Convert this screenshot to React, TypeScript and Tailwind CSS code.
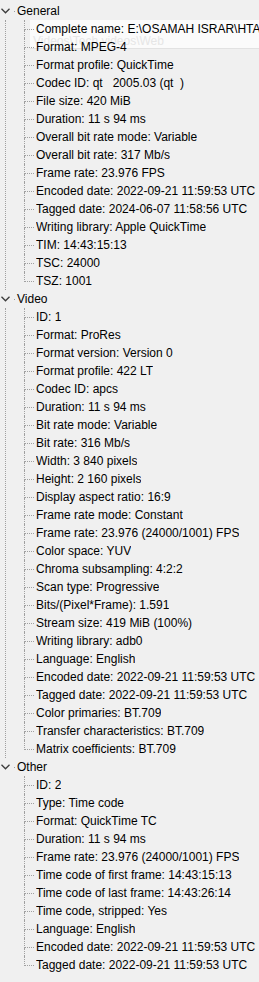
const sections = [
  {
    title: "General",
    items: [
      "Complete name: E:\\OSAMAH ISRAR\\HTA Videos\\Tech videos\\Web\\clip.mov",
      "Format: MPEG-4",
      "Format profile: QuickTime",
      "Codec ID: qt   2005.03 (qt  )",
      "File size: 420 MiB",
      "Duration: 11 s 94 ms",
      "Overall bit rate mode: Variable",
      "Overall bit rate: 317 Mb/s",
      "Frame rate: 23.976 FPS",
      "Encoded date: 2022-09-21 11:59:53 UTC",
      "Tagged date: 2024-06-07 11:58:56 UTC",
      "Writing library: Apple QuickTime",
      "TIM: 14:43:15:13",
      "TSC: 24000",
      "TSZ: 1001",
    ],
  },
  {
    title: "Video",
    items: [
      "ID: 1",
      "Format: ProRes",
      "Format version: Version 0",
      "Format profile: 422 LT",
      "Codec ID: apcs",
      "Duration: 11 s 94 ms",
      "Bit rate mode: Variable",
      "Bit rate: 316 Mb/s",
      "Width: 3 840 pixels",
      "Height: 2 160 pixels",
      "Display aspect ratio: 16:9",
      "Frame rate mode: Constant",
      "Frame rate: 23.976 (24000/1001) FPS",
      "Color space: YUV",
      "Chroma subsampling: 4:2:2",
      "Scan type: Progressive",
      "Bits/(Pixel*Frame): 1.591",
      "Stream size: 419 MiB (100%)",
      "Writing library: adb0",
      "Language: English",
      "Encoded date: 2022-09-21 11:59:53 UTC",
      "Tagged date: 2022-09-21 11:59:53 UTC",
      "Color primaries: BT.709",
      "Transfer characteristics: BT.709",
      "Matrix coefficients: BT.709",
    ],
  },
  {
    title: "Other",
    items: [
      "ID: 2",
      "Type: Time code",
      "Format: QuickTime TC",
      "Duration: 11 s 94 ms",
      "Frame rate: 23.976 (24000/1001) FPS",
      "Time code of first frame: 14:43:15:13",
      "Time code of last frame: 14:43:26:14",
      "Time code, stripped: Yes",
      "Language: English",
      "Encoded date: 2022-09-21 11:59:53 UTC",
      "Tagged date: 2022-09-21 11:59:53 UTC",
    ],
  },
];

function Chevron() {
  return (
    <svg width="9" height="6" viewBox="0 0 9 6" className="ml-[1px] shrink-0">
      <polyline points="0.5,0.8 4.5,4.8 8.5,0.8" fill="none" stroke="#3c3c3c" strokeWidth="1.3" />
    </svg>
  );
}

function Section({ title, items, last }: { title: string; items: string[]; last: boolean }) {
  return (
    <div>
      <div className="flex h-[18px] items-center">
        <Chevron />
        <span className="ml-[4px] h-[1px] w-[1px] shrink-0 bg-[#a0a0a0]" />
        <span className="ml-[2px] whitespace-pre">{title}</span>
      </div>
      <div
        className={`ml-[5px] border-l border-dotted pl-[18px] ${last ? "border-transparent" : "border-[#a0a0a0]"}`}
      >
        {items.map((item, i) => {
          const end = i === items.length - 1;
          return (
            <div key={item} className="flex h-[18px]">
              <div className="flex w-[10px] shrink-0 flex-col">
                <div className="h-[10px] border-b border-l border-dotted border-[#a0a0a0]" />
                <div className={`flex-1 border-l border-dotted ${end ? "border-transparent" : "border-[#a0a0a0]"}`} />
              </div>
              <span className="ml-[2px] flex items-center overflow-hidden whitespace-pre">{item}</span>
            </div>
          );
        })}
      </div>
    </div>
  );
}

export default function App() {
  return (
    <div className="relative h-[982px] w-[259px] overflow-hidden bg-[#f0f0f0] pt-[2px] font-['Liberation_Sans',Arial,sans-serif] text-[12px] leading-[18px] text-black">
      <div className="absolute left-[30px] right-0 top-[20px] h-[29px] border-b border-[#e2e2e2] bg-[#fbfbfb] pl-[3px] pt-[15px] text-[12px] leading-[12px] text-[#e6e6e6]">
        Videos\Tech videos\Web
      </div>
      <div className="relative">
        {sections.map((s, i) => (
          <Section key={s.title} title={s.title} items={s.items} last={i === sections.length - 1} />
        ))}
      </div>
    </div>
  );
}
